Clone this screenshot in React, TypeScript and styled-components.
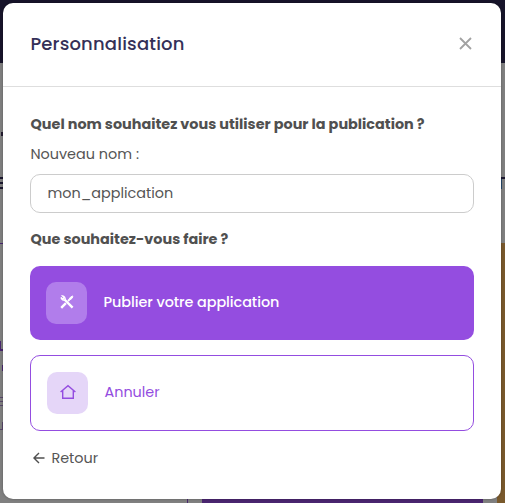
import React from "react";
import styled, { createGlobalStyle } from "styled-components";

const GlobalStyle = createGlobalStyle`
  * { box-sizing: border-box; }
  body {
    margin: 0;
    overflow: hidden;
    font-family: Poppins, Inter, "Open Sans", sans-serif;
    font-size: 14.4px;
    color: #555;
  }
`;

const Page = styled.div`
  position: relative;
  display: flex;
  flex-direction: column;
  width: 505px;
  height: 503px;
  overflow: hidden;
  background: #808080;
`;

const TopBar = styled.div`
  flex: 0 0 63px;
  background: #17142a;
`;

const Content = styled.div`
  flex: 1;
  display: flex;
  min-height: 0;
`;

const LeftColumn = styled.div`
  flex: 0 0 202px;
  display: flex;
  flex-direction: column;
  border-right: 14px solid #808080;
  box-shadow: inset -1px 0 #49276f;
`;

const Scrap = styled.div<{ $gap: number; $h: number; $w?: number; $color: string }>`
  flex: none;
  margin-top: ${(p) => p.$gap}px;
  height: ${(p) => p.$h}px;
  width: ${(p) => p.$w ?? 3}px;
  background: ${(p) => p.$color};
`;

const PurpleCard = styled.div`
  flex: 0 0 281px;
  margin-right: 14px;
  background: #4a2570;
`;

const RightColumn = styled.div`
  flex: 1;
  display: flex;
  flex-direction: column;
  align-items: flex-end;
`;

const OrangeCard = styled.div`
  flex: 1;
  width: 100%;
  margin-top: 54px;
  background: #79592c;
`;

const Dialog = styled.section`
  position: absolute;
  top: 3px;
  left: 3px;
  width: 498px;
  height: 496px;
  border-radius: 10px;
  background: #fff;
  box-shadow: 0 0 3px rgba(0, 0, 0, 0.3);
`;

const Header = styled.header`
  display: flex;
  align-items: center;
  justify-content: space-between;
  height: 84px;
  padding: 0 29px 2px 27px;
  border-bottom: 1px solid #dedede;
`;

const Title = styled.h1`
  margin: 0;
  font-size: 18px;
  line-height: 26px;
  font-weight: 500;
  letter-spacing: 0.18px;
  text-indent: 0.4px;
  color: #343058;
`;

const IconButton = styled.button`
  display: flex;
  padding: 0;
  border: 0;
  background: none;
`;

const Body = styled.div`
  display: flex;
  flex-direction: column;
  align-items: stretch;
  padding: 26px 27px 0;
`;

const Question = styled.h2`
  margin: 0;
  font-size: 14.4px;
  line-height: 22px;
  font-weight: 700;
  text-indent: 0.5px;
  white-space: nowrap;
  color: #505050;
`;

const Label = styled.label`
  margin: 8px 0 9px;
  line-height: 22px;
  text-indent: 0.5px;
`;

const NameInput = styled.input`
  height: 39px;
  margin-bottom: 15px;
  padding: 0 16.5px 1px;
  border: 1px solid #ccc;
  border-radius: 10px;
  outline: 0;
  background: #fff;
  color: #555;
  font: inherit;
`;

const Action = styled.button<{ $primary?: boolean }>`
  display: flex;
  align-items: center;
  gap: 16.5px;
  height: ${(p) => (p.$primary ? 74 : 76)}px;
  margin-top: ${(p) => (p.$primary ? 16 : 15)}px;
  padding: 0 16px;
  border: ${(p) => (p.$primary ? "0" : "1px solid #944de0")};
  border-radius: 10px;
  background: ${(p) => (p.$primary ? "#944de0" : "#fff")};
  color: ${(p) => (p.$primary ? "#fff" : "#944de0")};
  font: inherit;
  font-weight: ${(p) => (p.$primary ? 500 : 400)};
  letter-spacing: ${(p) => (p.$primary ? "-0.06px" : "0")};
`;

const ActionText = styled.span`
  padding-bottom: 2px;
`;

const IconTile = styled.span<{ $primary?: boolean }>`
  display: flex;
  align-items: center;
  justify-content: center;
  width: 41px;
  height: 42px;
  padding-bottom: 2px;
  border-radius: 10px;
  background: ${(p) => (p.$primary ? "#b17deb" : "#e5d6f8")};
`;

const Back = styled.a`
  display: flex;
  align-items: center;
  gap: 6.4px;
  margin-top: 16px;
  padding-left: 3px;
  line-height: 22px;
`;

const CloseIcon = () => (
  <svg width="13" height="13" viewBox="0 0 13 13" fill="none" stroke="#a2a2a2" strokeWidth="1.8">
    <path d="M1 1L12 12M12 1L1 12" />
  </svg>
);

const ToolsIcon = () => (
  <svg width="14" height="14" viewBox="0 0 14 14" fill="none" stroke="#fff">
    <path d="M4.5 4.5L12.6 12.6" strokeWidth="2.4" />
    <path d="M1.1 2.5L2.8 4.2L4.3 2.7L2.6 1A2.9 2.9 0 0 1 5.1 4.7" strokeWidth="1.3" />
    <path d="M1.2 2.5A2.7 2.7 0 0 0 4.9 4.9" strokeWidth="1.5" />
    <path d="M1.2 12.8L5.9 8.1" strokeWidth="2.4" />
    <path d="M8 6L9.5 4.5" strokeWidth="1.8" />
    <path d="M9.2 4.8L9.8 2.8L12.3 1L13 1.7L11.2 4.2L9.2 4.8Z" fill="#fff" strokeWidth="1" />
  </svg>
);

const HomeIcon = () => (
  <svg width="16" height="16" viewBox="0 0 16 16" fill="none" stroke="#944de0" strokeWidth="1.4">
    <path d="M.6 8L8 1.6L15.4 8M2.7 6.6V14.3H13.3V6.6" />
  </svg>
);

const ArrowIcon = () => (
  <svg width="12" height="12" viewBox="0 0 12 12" fill="none" stroke="#4f4f4f" strokeWidth="1.4">
    <path d="M.9 6H11.5M6 .9L.9 6L6 11.1" />
  </svg>
);

export default function App() {
  return (
    <>
      <GlobalStyle />
      <Page>
        <TopBar />
        <Content>
          <LeftColumn>
            <Scrap $gap={69} $h={4} $color="linear-gradient(90deg, #808080 1px, #241c31 1px)" />
            <Scrap $gap={41} $h={2} $color="#1b172f" />
            <Scrap $gap={3} $h={2} $color="#1b172f" />
            <Scrap $gap={3} $h={2} $color="#1b172f" />
            <Scrap $gap={54} $h={1} $color="#49276f" />
            <Scrap $gap={97} $h={8} $w={1} $color="#49276f" />
            <Scrap $gap={0} $h={2} $color="#49276f" />
            <Scrap $gap={14} $h={6} $color="linear-gradient(90deg, #808080 2px, #49276f 2px)" />
            <Scrap $gap={26} $h={1} $color="#59476b" />
            <Scrap $gap={3} $h={1} $color="#59476b" />
            <Scrap $gap={3} $h={1} $color="#59476b" />
            <Scrap $gap={16} $h={7} $color="linear-gradient(90deg, #808080 2px, #59476b 2px)" />
            <Scrap $gap={0} $h={1} $color="#59476b" />
          </LeftColumn>
          <PurpleCard />
          <RightColumn>
            <Scrap $gap={114} $h={2} $w={4} $color="#1b172f" />
            <Scrap $gap={0} $h={10} $w={4} $color="linear-gradient(90deg, #24476b 1px, #808080 1px)" />
            <OrangeCard />
          </RightColumn>
        </Content>
        <Dialog role="dialog">
          <Header>
            <Title>Personnalisation</Title>
            <IconButton aria-label="Fermer">
              <CloseIcon />
            </IconButton>
          </Header>
          <Body>
            <Question>Quel nom souhaitez vous utiliser pour la publication ?</Question>
            <Label htmlFor="name">Nouveau nom :</Label>
            <NameInput id="name" defaultValue="mon_application" />
            <Question>Que souhaitez-vous faire ?</Question>
            <Action $primary>
              <IconTile $primary>
                <ToolsIcon />
              </IconTile>
              <ActionText>Publier votre application</ActionText>
            </Action>
            <Action>
              <IconTile>
                <HomeIcon />
              </IconTile>
              <ActionText>Annuler</ActionText>
            </Action>
            <Back>
              <ArrowIcon />
              Retour
            </Back>
          </Body>
        </Dialog>
      </Page>
    </>
  );
}
